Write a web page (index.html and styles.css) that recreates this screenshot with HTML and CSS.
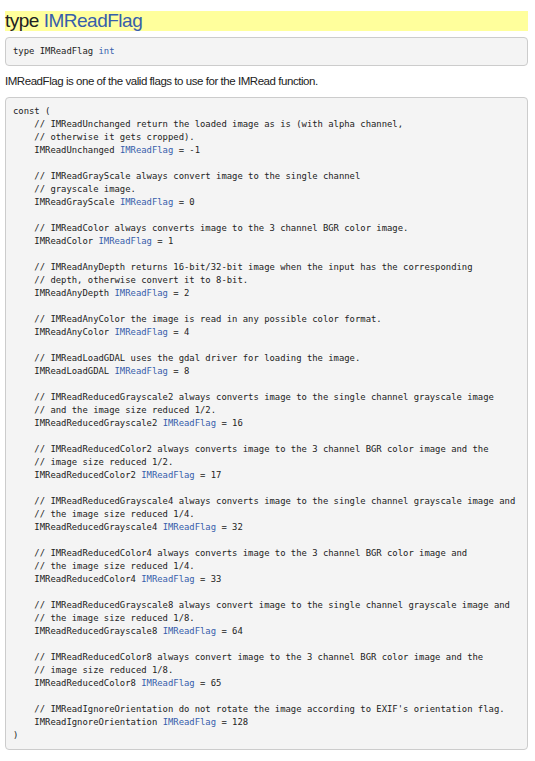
FILE: index.html
```html
<!DOCTYPE html>
<html>
<head>
<meta charset="utf-8">
<link rel="stylesheet" href="styles.css">
</head>
<body>
<div class="page">
<h2 class="title">type <a class="link" href="#">IMReadFlag</a></h2>
<pre class="code decl">type IMReadFlag <a class="link" href="#">int</a></pre>
<p class="desc">IMReadFlag is one of the valid flags to use for the IMRead function.</p>
<pre class="code">const (
    // IMReadUnchanged return the loaded image as is (with alpha channel,
    // otherwise it gets cropped).
    IMReadUnchanged <a class="link" href="#">IMReadFlag</a> = -1

    // IMReadGrayScale always convert image to the single channel
    // grayscale image.
    IMReadGrayScale <a class="link" href="#">IMReadFlag</a> = 0

    // IMReadColor always converts image to the 3 channel BGR color image.
    IMReadColor <a class="link" href="#">IMReadFlag</a> = 1

    // IMReadAnyDepth returns 16-bit/32-bit image when the input has the corresponding
    // depth, otherwise convert it to 8-bit.
    IMReadAnyDepth <a class="link" href="#">IMReadFlag</a> = 2

    // IMReadAnyColor the image is read in any possible color format.
    IMReadAnyColor <a class="link" href="#">IMReadFlag</a> = 4

    // IMReadLoadGDAL uses the gdal driver for loading the image.
    IMReadLoadGDAL <a class="link" href="#">IMReadFlag</a> = 8

    // IMReadReducedGrayscale2 always converts image to the single channel grayscale image
    // and the image size reduced 1/2.
    IMReadReducedGrayscale2 <a class="link" href="#">IMReadFlag</a> = 16

    // IMReadReducedColor2 always converts image to the 3 channel BGR color image and the
    // image size reduced 1/2.
    IMReadReducedColor2 <a class="link" href="#">IMReadFlag</a> = 17

    // IMReadReducedGrayscale4 always converts image to the single channel grayscale image and
    // the image size reduced 1/4.
    IMReadReducedGrayscale4 <a class="link" href="#">IMReadFlag</a> = 32

    // IMReadReducedColor4 always converts image to the 3 channel BGR color image and
    // the image size reduced 1/4.
    IMReadReducedColor4 <a class="link" href="#">IMReadFlag</a> = 33

    // IMReadReducedGrayscale8 always convert image to the single channel grayscale image and
    // the image size reduced 1/8.
    IMReadReducedGrayscale8 <a class="link" href="#">IMReadFlag</a> = 64

    // IMReadReducedColor8 always convert image to the 3 channel BGR color image and the
    // image size reduced 1/8.
    IMReadReducedColor8 <a class="link" href="#">IMReadFlag</a> = 65

    // IMReadIgnoreOrientation do not rotate the image according to EXIF's orientation flag.
    IMReadIgnoreOrientation <a class="link" href="#">IMReadFlag</a> = 128
)</pre>
</div>
</body>
</html>
```
FILE: styles.css
```css
html, body {
  margin: 0;
  padding: 0;
  background: #ffffff;
}

.page {
  padding: 11px 7px 0 5px;
  font-family: "Liberation Sans", Arial, sans-serif;
  color: #222222;
}

.title {
  margin: 0;
  font-size: 19px;
  letter-spacing: -0.5px;
  line-height: 20px;
  height: 20px;
  font-weight: normal;
  background: #ffff9c;
  color: #222222;
}

.link {
  color: #375eab;
  text-decoration: none;
}

.code {
  margin: 0;
  padding: 7px 7px;
  background: #f4f4f4;
  border: 1px solid #cccccc;
  border-radius: 4px;
  font-family: "DejaVu Sans Mono", monospace;
  font-size: 8.9px;
  line-height: 13px;
  letter-spacing: 0;
  color: #222222;
  white-space: pre;
  overflow: hidden;
}

.decl {
  margin-top: 6px;
}

.desc {
  margin: 8px 0 9px;
  font-size: 11.5px;
  letter-spacing: -0.45px;
  line-height: 14px;
}
```
